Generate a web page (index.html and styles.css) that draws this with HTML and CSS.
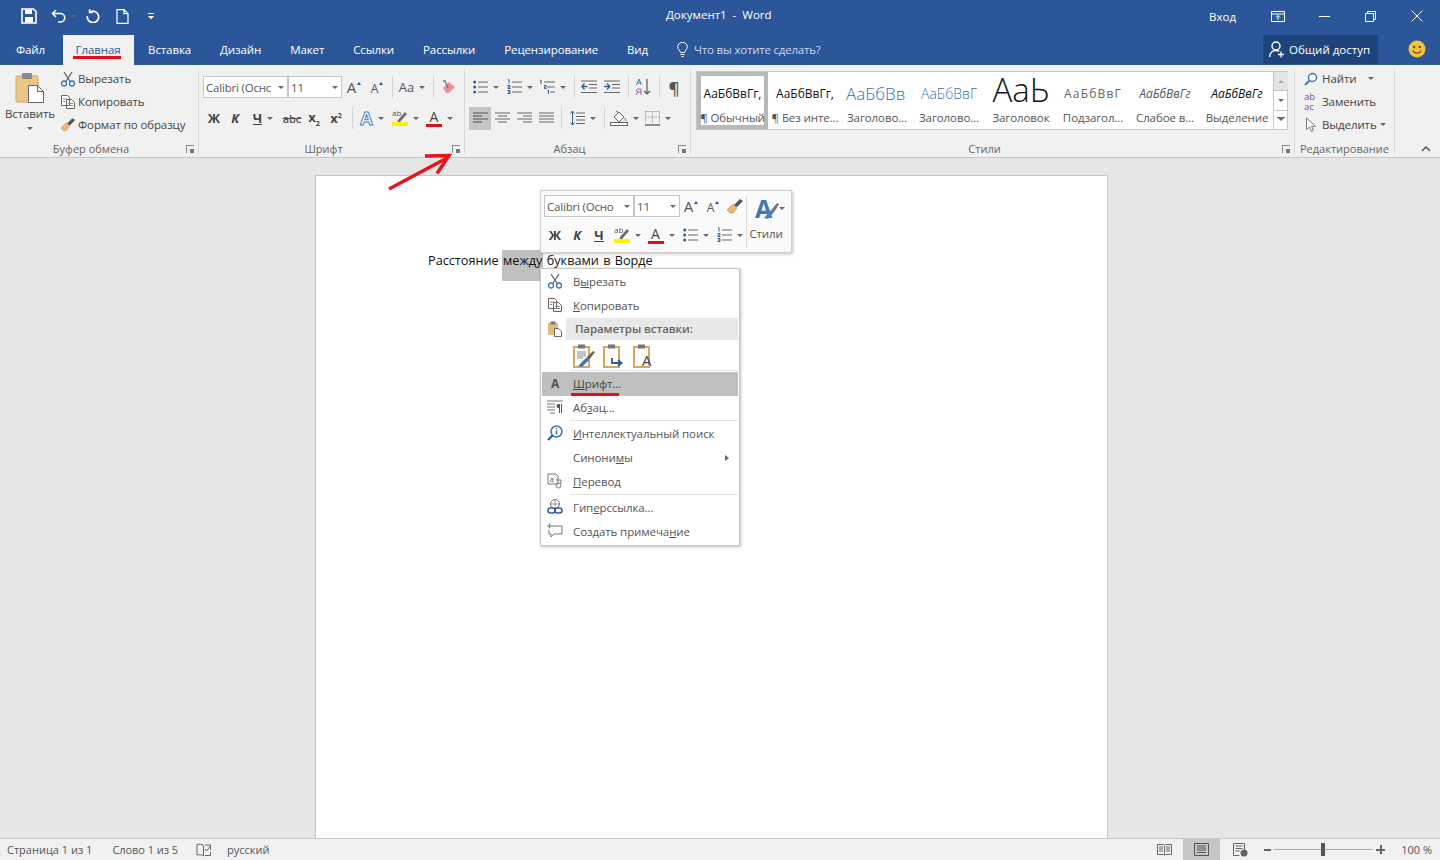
FILE: index.html
```html
<!DOCTYPE html>
<html lang="ru">
<head>
  <meta charset="UTF-8">
  <title>Документ1 - Word</title>
  <link rel="stylesheet" href="styles.css">
</head>
<body>
  <svg class="defs" width="0" height="0">
    <defs>
      <symbol id="i-cut" viewBox="0 0 16 16"><path d="M4 1l6.500 10M12 1L5.500 11" fill="none" stroke="#666" stroke-width="1.300"/><circle cx="4" cy="12.500" r="2.500" fill="none" stroke="#3f78b0" stroke-width="1.300"/><circle cx="12" cy="12.500" r="2.500" fill="none" stroke="#3f78b0" stroke-width="1.300"/></symbol>
      <symbol id="i-copy" viewBox="0 0 16 16"><path d="M1.500 1.500h6l2 2v8h-8zM6.500 5.500h5l3 3v6h-8z" fill="#fff" stroke="#666"/><path d="M3 5h4M3 7.500h2M8 9.500h5M8 11.500h5" stroke="#888"/></symbol>
      <symbol id="i-brush" viewBox="0 0 18 16"><path d="M1 12l6-6 4 4-4 5H4z" fill="#e6bd78" stroke="#b58b45" stroke-width=".6"/><path d="M8 7l6-6 3 2-6 6z" fill="#555"/></symbol>
      <symbol id="i-paste" viewBox="0 0 30 32"><rect x="1" y="4" width="22" height="26" rx="1.500" fill="#e9c688" stroke="#d3a95f"/><rect x="7" y="1" width="10" height="6" rx="1" fill="#8a8a8a"/><path d="M13.500 13.500h9l6 6v11h-15z" fill="#fff" stroke="#666"/><path d="M22.500 13.500v6h6" fill="none" stroke="#666"/></symbol>
      <symbol id="i-eraser" viewBox="0 0 16 16"><path d="M2 9l6-6 6 5-6 6H5z" fill="#ef8f9b"/><path d="M4 2l3 7" stroke="#777" stroke-width="1.400"/><path d="M2 2l3 0" stroke="#4d82b8" stroke-width="1.400"/></symbol>
      <symbol id="i-bullets" viewBox="0 0 15 16"><path d="M5 3h10M5 8h10M5 13h10" stroke="#666"/><circle cx="1.700" cy="3" r="1.500" fill="#2f5f97"/><circle cx="1.700" cy="8" r="1.500" fill="#2f5f97"/><circle cx="1.700" cy="13" r="1.500" fill="#2f5f97"/></symbol>
      <symbol id="i-numbers" viewBox="0 0 15 16"><path d="M5 3h10M5 8h10M5 13h10" stroke="#666"/><path d="M1 1l1-.500v4M.500 6.500h2.500v1.500h-2v1.500h2.500M.500 11.500h2.500v3h-2.500M1 13h2" fill="none" stroke="#2f5f97"/></symbol>
      <symbol id="i-multi" viewBox="0 0 16 16"><path d="M5 3h11M8 8h8M11 13h5" stroke="#666"/><path d="M1 1.500l1-.500v4M5 6.500h2v1.500h-1.500v1.500h2M8.500 11.500l1-.500v4" fill="none" stroke="#2f5f97"/></symbol>
      <symbol id="i-outdent" viewBox="0 0 16 14"><path d="M0 1h16M8 4.500h8M8 8h8M0 12.500h16" stroke="#666"/><path d="M6.500 6.500H1M3.500 3.500L.800 6.500l2.700 3" fill="none" stroke="#2f5f97" stroke-width="1.300"/></symbol>
      <symbol id="i-indent" viewBox="0 0 16 14"><path d="M0 1h16M8 4.500h8M8 8h8M0 12.500h16" stroke="#666"/><path d="M0 6.500h5.500M3 3.500l2.700 3-2.700 3" fill="none" stroke="#2f5f97" stroke-width="1.300"/></symbol>
      <symbol id="i-sort" viewBox="0 0 16 18"><path d="M12 1v15M9 13l3 3 3-3" fill="none" stroke="#555" stroke-width="1.200"/><path d="M1.500 7L4 1l2.500 6M2.500 5h3" fill="none" stroke="#3f78b0"/><path d="M6 11H3a1.500 1.500 0 0 0 0 3h3M6 11v6M3 14l-2 3" fill="none" stroke="#b0559a"/></symbol>
      <symbol id="i-left" viewBox="0 0 15 12"><path d="M0 1h15M0 4h9M0 7h15M0 10h9" stroke="#555"/></symbol>
      <symbol id="i-center" viewBox="0 0 15 12"><path d="M0 1h15M3 4h9M0 7h15M3 10h9" stroke="#666"/></symbol>
      <symbol id="i-right" viewBox="0 0 15 12"><path d="M0 1h15M6 4h9M0 7h15M6 10h9" stroke="#666"/></symbol>
      <symbol id="i-just" viewBox="0 0 15 12"><path d="M0 1h15M0 4h15M0 7h15M0 10h15" stroke="#666"/></symbol>
      <symbol id="i-spacing" viewBox="0 0 15 16"><path d="M6 3h9M6 6.500h9M6 10h9M6 13.500h9" stroke="#666"/><path d="M2.500 1v14M.500 3.500l2-2.500 2 2.500M.500 12.500l2 2.500 2-2.500" fill="none" stroke="#2f5f97"/></symbol>
      <symbol id="i-shade" viewBox="0 0 18 16"><path d="M4 7l5-5 5 5-5 5z" fill="#fff" stroke="#666"/><path d="M6 1l3 2" stroke="#666"/><path d="M14.500 8c1.200 1.500 1.500 2.300 1.500 3" stroke="#666" fill="none"/><rect x=".500" y="12.500" width="17" height="3" fill="#fff" stroke="#666"/></symbol>
      <symbol id="i-border" viewBox="0 0 15 15"><path d="M.500 .500h14v11M.500 .500v11M7.500 .500v11M.500 6h14" fill="none" stroke="#888" stroke-dasharray="1 1"/><path d="M0 14h15" stroke="#555" stroke-width="1.300"/></symbol>
      <symbol id="i-hl" viewBox="0 0 16 18"><text x="0" y="7" class="svg-t">ab</text><path d="M6 11L13 3l2 2-7 8-3 1z" fill="#6d6d6d"/><rect x="0" y="13" width="16" height="4" fill="#fff200"/></symbol>
      <symbol id="i-find" viewBox="0 0 14 14"><circle cx="8.500" cy="5.500" r="4" fill="#fff" stroke="#3f78b0" stroke-width="1.500"/><path d="M5.500 8.500L1 13" stroke="#3f78b0" stroke-width="2"/></symbol>
      <symbol id="i-select" viewBox="0 0 12 16"><path d="M1.500 1v11.500l3-2.500 2 4.500 2-1-2-4.200h4z" fill="#fff" stroke="#777"/></symbol>
      <symbol id="i-smart" viewBox="0 0 16 16"><circle cx="9.500" cy="6.500" r="5.500" fill="#fff" stroke="#3f78b0" stroke-width="1.500"/><path d="M5.500 10.500L1 15" stroke="#2f5f97" stroke-width="2.200"/><path d="M9.500 3v1M9.500 5.500v4" stroke="#2f5f97" stroke-width="1.400"/></symbol>
      <symbol id="i-para" viewBox="0 0 16 14"><path d="M0 1h16M0 4h8M0 7h8M0 10h8M3 13h5" stroke="#777"/><path d="M14.500 4v9M12.500 4v9" stroke="#555"/><path d="M13 4h-1.500a2 2 0 0 0 0 4H13z" fill="#555"/></symbol>
      <symbol id="i-trans" viewBox="0 0 16 16"><path d="M1 1h8l2 2v8H1z" fill="#fff" stroke="#777"/><text x="2.500" y="9" class="svg-t">a</text><path d="M9 7h5v4" fill="none" stroke="#777"/><circle cx="11.500" cy="12.500" r="2.500" fill="none" stroke="#777"/></symbol>
      <symbol id="i-link" viewBox="0 0 16 16"><circle cx="8" cy="5" r="4.500" fill="#fff" stroke="#777"/><path d="M3.500 5h9M8 .500v9" stroke="#777" stroke-width=".7"/><rect x="1" y="9" width="7" height="5" rx="2.500" fill="none" stroke="#2f5f97" stroke-width="1.500"/><rect x="8" y="9" width="7" height="5" rx="2.500" fill="none" stroke="#2f5f97" stroke-width="1.500"/></symbol>
      <symbol id="i-note" viewBox="0 0 16 16"><path d="M5 3h10v8H7l-3 3v-3H2V7" fill="#fff" stroke="#777"/><path d="M0 3h5M2.500 .500v5" stroke="#2f9d62" stroke-width="1.100"/></symbol>
      <symbol id="i-pastesm" viewBox="0 0 16 16"><rect x="1" y="2" width="10" height="12" fill="#e6bd78"/><rect x="3.500" y="0.500" width="5" height="3" fill="#777"/><path d="M7.500 7.500h4l3 3v5h-7z" fill="#fff" stroke="#666"/></symbol>
    </defs>
  </svg>

  <header class="titlebar">
    <div class="qat">
      <svg width="16" height="16" viewBox="0 0 16 16"><path d="M1 1h11.500L15 3.500V15H1z" fill="none" stroke="#fff" stroke-width="1.600"/><rect x="4" y="1.500" width="7" height="4.500" fill="#fff"/><rect x="4" y="9" width="8" height="5.500" fill="#fff"/></svg>
      <svg class="undo" width="15" height="14" viewBox="0 0 15 14"><path d="M5 1L1.500 4.500 5 8M2 4.500h7.500a4 4 0 0 1 0 8.500H7" fill="none" stroke="#fff" stroke-width="1.600"/></svg>
      <span class="caret caret-w"></span>
      <svg class="redo" width="14" height="14" viewBox="0 0 14 14"><path d="M3.800 3.200A5.700 5.700 0 1 1 1.300 7.200" fill="none" stroke="#fff" stroke-width="1.700"/><path d="M3.500 .300v3.300h3.400" fill="none" stroke="#fff" stroke-width="1.500"/></svg>
      <svg class="newdoc" width="13" height="15" viewBox="0 0 13 15"><path d="M1 .700h7l4 4v9.600H1zM8 .700v4h4" fill="none" stroke="#fff" stroke-width="1.200"/></svg>
      <svg class="more" width="8" height="8" viewBox="0 0 8 8"><path d="M1 1.500h6" stroke="#fff"/><path d="M.800 4h6.400L4 7.300z" fill="#fff"/></svg>
    </div>
    <div class="doc-title">Документ1&nbsp; -&nbsp; Word</div>
    <div class="win">
      <span class="signin">Вход</span>
      <svg class="win-ico first" width="14" height="11" viewBox="0 0 14 11"><path d="M.500 .500h13v10H.500zM.500 3h13" fill="none" stroke="#fff"/><path d="M7 9V4.500M5 6.500l2-2 2 2" fill="none" stroke="#fff"/></svg>
      <svg class="win-ico" width="11" height="11" viewBox="0 0 11 11"><path d="M0 5.500h11" stroke="#fff"/></svg>
      <svg class="win-ico" width="11" height="11" viewBox="0 0 11 11"><path d="M.500 2.500h8v8h-8zM2.500 2.500v-2h8v8h-2" fill="none" stroke="#fff"/></svg>
      <svg class="win-ico" width="12" height="12" viewBox="0 0 12 12"><path d="M.500 .500l11 11M11.500 .500l-11 11" stroke="#fff"/></svg>
    </div>
  </header>

  <nav class="tabs">
    <a class="tab">Файл</a>
    <a class="tab active">Главная</a>
    <a class="tab">Вставка</a>
    <a class="tab">Дизайн</a>
    <a class="tab">Макет</a>
    <a class="tab">Ссылки</a>
    <a class="tab">Рассылки</a>
    <a class="tab">Рецензирование</a>
    <a class="tab">Вид</a>
    <div class="tell">
      <svg width="11" height="15" viewBox="0 0 11 15"><path d="M3.500 10.500C3 8 .700 7.500 .700 4.700a4.800 4.300 0 0 1 9.600 0c0 2.800-2.300 3.300-2.800 5.800zM3.500 12.500h4M4.500 14.500h2" fill="none" stroke="#fff"/></svg>
      <span>Что вы хотите сделать?</span>
    </div>
    <div class="share">
      <svg width="16" height="17" viewBox="0 0 16 17"><circle cx="7" cy="5" r="4" fill="none" stroke="#fff" stroke-width="1.400"/><path d="M.700 16c0-4 2.500-6.500 6.300-6.500 1.300 0 2.300.3 3.200.8" fill="none" stroke="#fff" stroke-width="1.400"/><path d="M12 10.500v6M9 13.500h6" stroke="#fff" stroke-width="1.300"/></svg>
      <span>Общий доступ</span>
    </div>
    <svg class="smile" width="18" height="18" viewBox="0 0 18 18"><circle cx="9" cy="9" r="8.500" fill="#f5c33b"/><circle cx="6.200" cy="7" r="1.200" fill="#6b4a10"/><circle cx="11.800" cy="7" r="1.200" fill="#6b4a10"/><path d="M4.800 10.500c1.800 3.500 6.600 3.500 8.400 0" fill="none" stroke="#6b4a10" stroke-width="1.100"/></svg>
  </nav>

  <section class="ribbon">
    <div class="group g-clip">
      <div class="group-body clip-body">
        <div class="paste">
          <svg width="30" height="32"><use href="#i-paste"/></svg>
          <span>Вставить</span>
          <span class="caret"></span>
        </div>
        <div class="stack">
          <div class="stack-row"><svg width="16" height="16"><use href="#i-cut"/></svg><span>Вырезать</span></div>
          <div class="stack-row"><svg width="16" height="16"><use href="#i-copy"/></svg><span>Копировать</span></div>
          <div class="stack-row"><svg width="16" height="15"><use href="#i-brush"/></svg><span>Формат по образцу</span></div>
        </div>
      </div>
      <div class="group-label">Буфер обмена<span class="launch"></span></div>
    </div>

    <div class="group g-font">
      <div class="group-body tool-rows">
        <div class="row">
          <div class="combo c-font"><span class="combo-text">Calibri (Оснс</span><span class="caret"></span></div>
          <div class="combo c-size"><span class="combo-text">11</span><span class="caret"></span></div>
          <div class="btn w24"><span class="big-a">A</span><span class="sup-caret"></span></div>
          <div class="btn w22"><span class="small-a">A</span><span class="sup-caret"></span></div>
          <span class="sep w8"></span>
          <div class="btn w32"><span class="aa">Aa</span><span class="caret"></span></div>
          <span class="sep w10"></span>
          <div class="btn w22"><svg width="16" height="16"><use href="#i-eraser"/></svg></div>
        </div>
        <div class="row">
          <div class="btn w22"><b class="fmt">Ж</b></div>
          <div class="btn w20"><b class="fmt"><i>К</i></b></div>
          <div class="btn w36"><b class="fmt und">Ч</b><span class="caret"></span></div>
          <div class="btn w22"><span class="strike">abc</span></div>
          <div class="btn w22"><b class="fmt">x<sub>2</sub></b></div>
          <div class="btn w22"><b class="fmt">x<sup>2</sup></b></div>
          <span class="sep w10"></span>
          <div class="btn w30"><span class="fx">A</span><span class="caret"></span></div>
          <div class="btn w37"><svg width="16" height="18"><use href="#i-hl"/></svg><span class="caret"></span></div>
          <div class="btn w31"><span class="acolor">A</span><span class="caret"></span></div>
        </div>
      </div>
      <div class="group-label">Шрифт<span class="launch"></span></div>
    </div>

    <div class="group g-para">
      <div class="group-body tool-rows">
        <div class="row">
          <div class="btn w34"><svg width="15" height="16"><use href="#i-bullets"/></svg><span class="caret"></span></div>
          <div class="btn w33"><svg width="15" height="16"><use href="#i-numbers"/></svg><span class="caret"></span></div>
          <div class="btn w32"><svg width="16" height="16"><use href="#i-multi"/></svg><span class="caret"></span></div>
          <span class="sep w12"></span>
          <div class="btn w18"><svg width="16" height="14"><use href="#i-outdent"/></svg></div>
          <div class="btn w28"><svg width="16" height="14"><use href="#i-indent"/></svg></div>
          <span class="sep w4"></span>
          <div class="btn w26"><svg width="16" height="18"><use href="#i-sort"/></svg></div>
          <span class="sep w6"></span>
          <div class="btn w24"><span class="pilcrow">¶</span></div>
        </div>
        <div class="row">
          <div class="btn w22 on"><svg width="15" height="12"><use href="#i-left"/></svg></div>
          <div class="btn w23"><svg width="15" height="12"><use href="#i-center"/></svg></div>
          <div class="btn w21"><svg width="15" height="12"><use href="#i-right"/></svg></div>
          <div class="btn w22"><svg width="15" height="12"><use href="#i-just"/></svg></div>
          <span class="sep w8"></span>
          <div class="btn w35"><svg width="15" height="16"><use href="#i-spacing"/></svg><span class="caret"></span></div>
          <span class="sep w8"></span>
          <div class="btn w32"><svg width="18" height="16"><use href="#i-shade"/></svg><span class="caret"></span></div>
          <div class="btn w36"><svg width="15" height="15"><use href="#i-border"/></svg><span class="caret"></span></div>
        </div>
      </div>
      <div class="group-label">Абзац<span class="launch"></span></div>
    </div>

    <div class="group g-styles">
      <div class="group-body">
        <div class="gallery">
          <div class="style-item selected"><span class="pv">АаБбВвГг,</span><span class="st-name">¶ Обычный</span></div>
          <div class="style-item"><span class="pv">АаБбВвГг,</span><span class="st-name">¶ Без инте...</span></div>
          <div class="style-item"><span class="pv pv-h1">АаБбВв</span><span class="st-name">Заголово...</span></div>
          <div class="style-item"><span class="pv pv-h2">АаБбВвГ</span><span class="st-name">Заголово...</span></div>
          <div class="style-item"><span class="pv pv-title">АаЬ</span><span class="st-name">Заголовок</span></div>
          <div class="style-item"><span class="pv pv-sub">АаБбВвГ</span><span class="st-name">Подзагол...</span></div>
          <div class="style-item"><span class="pv pv-weak">АаБбВвГг</span><span class="st-name">Слабое в...</span></div>
          <div class="style-item"><span class="pv pv-em">АаБбВвГг</span><span class="st-name">Выделение</span></div>
          <div class="gallery-scroll">
            <span class="gs gs-up"><i class="caret caret-up"></i></span>
            <span class="gs"><i class="caret"></i></span>
            <span class="gs gs-more"><i class="caret"></i></span>
          </div>
        </div>
      </div>
      <div class="group-label">Стили<span class="launch"></span></div>
    </div>

    <div class="group g-edit">
      <div class="group-body stack edit-stack">
        <div class="stack-row"><svg width="14" height="14"><use href="#i-find"/></svg><span>Найти</span><span class="caret find-caret"></span></div>
        <div class="stack-row"><span class="abac">ab<br>ac</span><span>Заменить</span></div>
        <div class="stack-row"><svg width="14" height="16"><use href="#i-select"/></svg><span>Выделить</span><span class="caret sel-caret"></span></div>
      </div>
      <div class="group-label label-edit">Редактирование</div>
    </div>

    <svg class="collapse" width="10" height="6" viewBox="0 0 10 6"><path d="M1 5l4-4 4 4" fill="none" stroke="#555" stroke-width="1.500"/></svg>
  </section>

  <main class="workspace">
    <div class="page">
      <p class="doc-line">Расстояние <span class="sel">между</span> буквами в Ворде</p>
    </div>
  </main>

  <footer class="status">
    <span class="st-page">Страница 1 из 1</span>
    <span class="st-words">Слово 1 из 5</span>
    <svg class="st-book" width="15" height="14" viewBox="0 0 15 14"><path d="M7.500 2.500C6 1 3 1 1 1.500V12c2-.5 5-.5 6.500 1V2.500M7.500 13V2.500" fill="none" stroke="#666"/><path d="M9 2h5.500v5M9 6l1.500 2L14 3.500M14.500 9v3.500H9" fill="none" stroke="#666"/></svg>
    <span class="st-lang">русский</span>
    <div class="st-right">
      <svg class="view" width="15" height="13" viewBox="0 0 15 13"><path d="M.500 1.500h6l1 1 1-1h6v10h-6l-1 1-1-1h-6zM7.500 2.500v9M2 4h4M2 6h4M2 8h4M9 4h4M9 6h4M9 8h4" fill="none" stroke="#666"/></svg>
      <span class="view-on"><svg width="15" height="13" viewBox="0 0 15 13"><path d="M.500 .500h14v12H.500zM3 3h9M3 5h9M3 7h9M3 9.500h9" fill="none" stroke="#555"/></svg></span>
      <svg class="view web" width="15" height="14" viewBox="0 0 15 14"><path d="M.500 .500h11v8M.500 .500v12h6M2.500 3h7M2.500 5.500h7M2.500 8h4" fill="none" stroke="#666"/><circle cx="11" cy="10" r="3.500" fill="#666"/></svg>
      <span class="zoom-minus"></span>
      <div class="slider"><span class="thumb"></span></div>
      <span class="zoom-plus"></span>
      <span class="zoom-val">100 %</span>
    </div>
  </footer>

  <!-- всплывающие элементы поверх документа -->
  <div class="mini">
    <div class="mini-left">
      <div class="row">
        <div class="combo c-mfont"><span class="combo-text">Calibri (Осно</span><span class="caret"></span></div>
        <div class="combo c-msize"><span class="combo-text">11</span><span class="caret"></span></div>
        <div class="btn w22"><span class="big-a">A</span><span class="sup-caret"></span></div>
        <div class="btn w22"><span class="small-a">A</span><span class="sup-caret"></span></div>
        <div class="btn w22"><svg width="18" height="16"><use href="#i-brush"/></svg></div>
      </div>
      <div class="row">
        <div class="btn w22"><b class="fmt">Ж</b></div>
        <div class="btn w22"><b class="fmt"><i>К</i></b></div>
        <div class="btn w22"><b class="fmt und">Ч</b></div>
        <div class="btn w34"><svg width="16" height="18"><use href="#i-hl"/></svg><span class="caret"></span></div>
        <div class="btn w34"><span class="acolor">A</span><span class="caret"></span></div>
        <div class="btn w35"><svg width="15" height="16"><use href="#i-bullets"/></svg><span class="caret"></span></div>
        <div class="btn w33"><svg width="15" height="16"><use href="#i-numbers"/></svg><span class="caret"></span></div>
      </div>
    </div>
    <div class="mini-styles">
      <div class="styles-ico"><span class="styles-a">A</span><svg width="16" height="18" viewBox="0 0 16 18"><path d="M1 16l8-9 3 2-7 8z" fill="#4d82b8"/><path d="M9 7l5-6 2 1-4 7z" fill="#777"/></svg><span class="caret"></span></div>
      <span>Стили</span>
    </div>
  </div>

  <ul class="menu">
    <li class="item"><svg width="16" height="16"><use href="#i-cut"/></svg><span>В<u>ы</u>резать</span></li>
    <li class="item"><svg width="16" height="16"><use href="#i-copy"/></svg><span><u>К</u>опировать</span></li>
    <li class="item paste-head"><svg width="16" height="16"><use href="#i-pastesm"/></svg><b>Параметры вставки:</b></li>
    <li class="paste-opts">
      <svg width="22" height="24" viewBox="0 0 22 24"><rect x="1" y="3" width="15" height="20" fill="#fff" stroke="#d3a95f" stroke-width="2"/><rect x="5" y="0.500" width="7" height="4" fill="#777"/><path d="M4 8h9M4 10h9M4 12h9M4 14h6" stroke="#888"/><path d="M5 22l8-8 3 2-7 7z" fill="#3f78b0"/><path d="M13 14l7-7 2 1-6 8z" fill="#666"/></svg>
      <svg width="22" height="24" viewBox="0 0 22 24"><rect x="1" y="3" width="15" height="20" fill="#fff" stroke="#d3a95f" stroke-width="2"/><rect x="5" y="0.500" width="7" height="4" fill="#777"/><path d="M9 14v5h9M15 16l3.500 3-3.500 3" fill="none" stroke="#2f5f97" stroke-width="1.800"/></svg>
      <svg class="opt-a" width="22" height="24" viewBox="0 0 22 24"><rect x="1" y="3" width="15" height="20" fill="#fff" stroke="#d3a95f" stroke-width="2"/><rect x="5" y="0.500" width="7" height="4" fill="#777"/><text x="9" y="22" class="svg-big">A</text></svg>
    </li>
    <li class="menu-sep"></li>
    <li class="item hot"><span class="font-a">A</span><span><u>Ш</u>рифт...</span></li>
    <li class="item"><svg width="16" height="14"><use href="#i-para"/></svg><span>Аб<u>з</u>ац...</span></li>
    <li class="menu-sep"></li>
    <li class="item"><svg width="16" height="16"><use href="#i-smart"/></svg><span><u>И</u>нтеллектуальный поиск</span></li>
    <li class="item"><span class="no-ico"></span><span>Синони<u>м</u>ы</span><i class="arrow-right"></i></li>
    <li class="item"><svg width="16" height="16"><use href="#i-trans"/></svg><span><u>П</u>еревод</span></li>
    <li class="menu-sep"></li>
    <li class="item"><svg width="16" height="16"><use href="#i-link"/></svg><span>Гип<u>е</u>рссылка...</span></li>
    <li class="item"><svg width="16" height="16"><use href="#i-note"/></svg><span>Создать примеча<u>н</u>ие</span></li>
  </ul>

  <svg class="red-arrow" width="70" height="42" viewBox="0 0 70 42"><path d="M2 38L60 7" stroke="#e8141c" stroke-width="3.500" fill="none"/><path d="M38 5l24-.500-12 18" stroke="#e8141c" stroke-width="3.500" fill="none"/></svg>
</body>
</html>
```

FILE: styles.css
```css
* {
  box-sizing: border-box;
}

body {
  margin: 0;
  width: 1440px;
  height: 860px;
  overflow: hidden;
  position: relative;
  display: flex;
  flex-direction: column;
  font-family: "Open Sans", "Noto Sans", sans-serif;
  font-size: 11.5px;
  color: #444;
  background: #e6e6e6;
}

.defs {
  position: absolute;
}

.svg-t {
  font-family: "Open Sans", sans-serif;
  font-size: 8px;
  fill: #555;
}

.svg-big {
  font-family: "Open Sans", sans-serif;
  font-size: 15px;
  fill: #444;
}

/* TITLE BAR */
.titlebar {
  height: 32px;
  flex: none;
  background: #2b579a;
  color: #fff;
  display: flex;
  align-items: center;
  position: relative;
}

.qat {
  display: flex;
  align-items: center;
  padding-left: 21px;
}

.undo {
  margin-left: 14px;
}

.caret-w {
  margin-left: 5px;
  border-top-color: #fff;
}

.redo {
  margin-left: 9px;
}

.newdoc {
  margin-left: 16px;
}

.more {
  margin-left: 18px;
}

.doc-title {
  position: absolute;
  left: 666px;
  top: 7px;
  white-space: nowrap;
}

.win {
  margin-left: auto;
  display: flex;
  align-items: center;
  height: 100%;
}

.signin {
  margin-right: 35px;
}

.win-ico {
  margin-right: 35px;
}

.win-ico.first {
  margin-right: 34px;
}

.win-ico:last-child {
  margin-right: 17px;
}

/* TABS */
.tabs {
  height: 33px;
  flex: none;
  background: #2b579a;
  color: #fff;
  display: flex;
  align-items: stretch;
  padding-left: 1.500px;
}

.tab {
  padding: 1px 14.500px 0;
  display: flex;
  align-items: center;
  white-space: nowrap;
  position: relative;
  letter-spacing: -0.1px;
}

.tab.active {
  background: #f1f1f1;
  color: #2b579a;
  margin: 3px 0 0 3px;
  padding: 0 13px 2px;
  width: 71px;
  justify-content: center;
}

.tab.active::after {
  content: "";
  position: absolute;
  left: 10px;
  right: 13px;
  top: 21px;
  height: 3px;
  background: #e0101c;
}

.tell {
  display: flex;
  align-items: center;
  gap: 6px;
  margin-left: 14.500px;
  padding-top: 1px;
  color: #c9d6ea;
  white-space: nowrap;
  letter-spacing: -0.2px;
}

.share {
  margin: 3px 0 1px auto;
  width: 115px;
  display: flex;
  align-items: center;
  gap: 4px;
  padding-left: 6px;
  background: #1f447c;
  white-space: nowrap;
}

.smile {
  align-self: center;
  margin: 0 14px 0 30px;
}

/* RIBBON */
.ribbon {
  height: 93px;
  flex: none;
  background: #f1f1f1;
  border-bottom: 1px solid #c6c6c6;
  display: flex;
  color: #444;
}

.group {
  display: flex;
  flex-direction: column;
  position: relative;
  margin: 4px 0 3px;
  border-right: 1px solid #dadada;
}

.group-body {
  flex: 1;
  min-height: 0;
}

.group-label {
  height: 16px;
  margin-bottom: -3px;
  padding-right: 16px;
  text-align: center;
  color: #666;
  font-size: 11px;
  line-height: 16px;
  position: relative;
  white-space: nowrap;
}

.label-edit {
  padding-right: 0;
}

.launch {
  position: absolute;
  right: 4px;
  top: 4px;
  width: 8px;
  height: 8px;
  border-left: 1px solid #888;
  border-top: 1px solid #888;
}

.launch::after {
  content: "";
  position: absolute;
  right: 0;
  bottom: 0;
  width: 4px;
  height: 4px;
  background: #777;
}

.g-clip {
  width: 199px;
}

.g-font {
  width: 266px;
}

.g-para {
  width: 226px;
}

.g-styles {
  width: 604px;
}

.g-edit {
  width: 100px;
}

.clip-body {
  display: flex;
}

.paste {
  width: 60px;
  display: flex;
  flex-direction: column;
  align-items: center;
  padding-top: 3px;
}

.paste span:nth-child(2) {
  margin-top: 2px;
  line-height: 16px;
  letter-spacing: -0.1px;
}

.paste .caret {
  margin-top: 5px;
}

.stack {
  margin-top: -2px;
  letter-spacing: -0.1px;
}

.stack-row {
  height: 23px;
  display: flex;
  align-items: center;
  gap: 2px;
  white-space: nowrap;
}

.stack-row svg {
  flex: none;
}

.tool-rows {
  padding: 7px 0 0 4px;
}

.row {
  display: flex;
  align-items: center;
  height: 22px;
  margin-bottom: 9px;
}

.btn {
  height: 22px;
  flex: none;
  display: flex;
  align-items: center;
  justify-content: center;
  position: relative;
}

.btn .caret {
  margin-left: 5px;
}

.btn.on {
  background: #c5c5c5;
  height: 23px;
}

.w18 { width: 18px; }
.w20 { width: 20px; }
.w21 { width: 21px; }
.w22 { width: 22px; }
.w23 { width: 23px; }
.w24 { width: 24px; }
.w26 { width: 26px; }
.w28 { width: 28px; }
.w30 { width: 30px; }
.w31 { width: 31px; }
.w32 { width: 32px; }
.w33 { width: 33px; }
.w34 { width: 34px; }
.w35 { width: 35px; }
.w36 { width: 36px; }
.w37 { width: 37px; }

.sep {
  height: 22px;
  flex: none;
  position: relative;
}

.sep::before {
  content: "";
  position: absolute;
  left: 50%;
  top: 0;
  bottom: 0;
  border-left: 1px solid #d4d4d4;
}

.sep.w4 { width: 4px; }
.sep.w6 { width: 6px; }
.sep.w8 { width: 8px; }
.sep.w10 { width: 10px; }
.sep.w12 { width: 12px; }

.caret {
  display: inline-block;
  width: 0;
  height: 0;
  flex: none;
  border-left: 3px solid transparent;
  border-right: 3px solid transparent;
  border-top: 3px solid #666;
}

.caret-up {
  border-top: 0;
  border-bottom: 3px solid #aaa;
}

.combo {
  height: 22px;
  flex: none;
  background: #fff;
  border: 1px solid #c6c6c6;
  display: flex;
  align-items: center;
  padding: 0 3px 0 2px;
  overflow: hidden;
}

.combo-text {
  flex: 1;
  min-width: 0;
  overflow: hidden;
  white-space: nowrap;
  font-size: 11.500px;
  letter-spacing: -0.2px;
  color: #555;
}

.c-font {
  width: 85px;
}

.c-size {
  width: 54px;
}

.c-mfont {
  width: 90px;
}

.c-msize {
  width: 46px;
}

.big-a {
  font-size: 15px;
  color: #555;
}

.small-a {
  font-size: 12px;
  color: #555;
  padding-top: 3px;
}

.sup-caret {
  width: 0;
  height: 0;
  margin: -8px 0 0 1px;
  border-left: 2.500px solid transparent;
  border-right: 2.500px solid transparent;
  border-bottom: 3px solid #2b579a;
}

.aa {
  font-size: 13px;
  color: #555;
}

.fmt {
  font-size: 13px;
  color: #444;
}

.fmt sub,
.fmt sup {
  font-size: 7px;
}

.und {
  border-bottom: 1.500px solid #444;
  line-height: 12px;
}

.strike {
  font-size: 11px;
  text-decoration: line-through;
  font-weight: 600;
  color: #555;
}

.fx {
  font-size: 18px;
  line-height: 18px;
  font-weight: 700;
  color: #fff;
  -webkit-text-stroke: 1px #4d82b8;
}

.acolor {
  font-size: 14px;
  line-height: 14px;
  color: #444;
  border-bottom: 3px solid #d8101c;
  width: 16px;
  text-align: center;
}

.pilcrow {
  font-size: 17px;
  font-weight: 600;
  color: #555;
}

/* STYLES GALLERY */
.gallery {
  margin: 2px 0 0 5px;
  width: 592px;
  height: 59px;
  background: #fff;
  border: 1px solid #c6c6c6;
  display: flex;
}

.style-item {
  width: 72px;
  flex: none;
  display: flex;
  flex-direction: column;
  align-items: center;
  padding: 5px 3px 0;
}

.style-item.selected {
  border: 4px solid #b8b8b8;
  padding: 1px 0 0;
  width: 71px;
  margin-right: 1px;
}

.pv {
  height: 33px;
  line-height: 33px;
  width: 64px;
  overflow: hidden;
  white-space: nowrap;
  font-size: 12px;
  color: #111;
  text-align: center;
  flex: none;
}

.pv-h1 {
  font-size: 17px;
  font-weight: 300;
  color: #2e74b5;
  text-align: left;
  width: 60px;
  align-self: flex-start;
  margin-left: 2px;
}

.pv-h2 {
  font-size: 14px;
  font-weight: 300;
  color: #2e74b5;
}

.pv-title {
  font-size: 33px;
  line-height: 26px;
  font-weight: 300;
  color: #111;
  overflow: visible;
}

.pv-sub {
  font-size: 12px;
  letter-spacing: 1.200px;
  color: #666;
}

.pv-weak {
  font-style: italic;
  color: #555;
}

.pv-em {
  font-style: italic;
  color: #111;
}

.st-name {
  font-size: 11.500px;
  line-height: 16px;
  white-space: nowrap;
  letter-spacing: -0.1px;
  color: #555;
}

.gallery-scroll {
  width: 15px;
  flex: none;
  display: flex;
  flex-direction: column;
  border-left: 1px solid #c6c6c6;
}

.gs {
  flex: 1;
  display: flex;
  align-items: center;
  justify-content: center;
  border-bottom: 1px solid #c6c6c6;
}

.gs:last-child {
  border-bottom: 0;
}

.gs-up {
  background: #e4e4e4;
}

.gs-more {
  position: relative;
}

.gs-more::before {
  content: "";
  position: absolute;
  left: 3px;
  right: 3px;
  top: 6px;
  border-top: 1px solid #666;
}

/* EDIT GROUP */
.edit-stack {
  padding: 0 0 0 9px;
  margin-top: -2px;
}

.edit-stack .stack-row {
  gap: 4px;
}

.abac {
  width: 14px;
  font-size: 9.500px;
  line-height: 10px;
  color: #7a4a9c;
}

.find-caret {
  margin-left: 8px;
}

.sel-caret {
  margin-left: -1px;
}

.collapse {
  align-self: flex-end;
  margin: 0 0 5px 26px;
}

/* DOCUMENT */
.workspace {
  flex: 1;
  min-height: 0;
  padding: 17px 0 0 315px;
  background: #e6e6e6;
  overflow: hidden;
}

.page {
  width: 793px;
  height: 700px;
  background: #fff;
  border: 1px solid #c6c6c6;
  padding: 74px 0 0 112px;
}

.doc-line {
  margin: 0;
  font-family: "Open Sans", sans-serif;
  font-size: 12.700px;
  word-spacing: 1px;
  line-height: 20px;
  color: #111;
  white-space: nowrap;
}

.sel {
  display: inline-block;
  height: 31px;
  margin: 0 -1px;
  padding: 0 1px;
  background: #c0c0c0;
  vertical-align: top;
}

/* STATUS BAR */
.status {
  height: 22px;
  flex: none;
  background: #f1f1f1;
  border-top: 1px solid #c6c6c6;
  display: flex;
  align-items: center;
  color: #555;
  font-size: 11px;
  white-space: nowrap;
}

.st-page {
  margin: 0 0 1px 7px;
}

.st-words {
  margin: 0 0 1px 20px;
  letter-spacing: -0.05px;
}

.st-book {
  margin-left: 18px;
}

.st-lang {
  margin: 0 0 1px 16px;
}

.st-right {
  margin-left: auto;
  display: flex;
  align-items: center;
  height: 100%;
}

.view-on {
  width: 37px;
  height: 100%;
  margin: 0 13px 0 11px;
  background: #c5c5c5;
  display: flex;
  align-items: center;
  justify-content: center;
}

.zoom-minus {
  width: 7px;
  height: 2px;
  margin-left: 16px;
  background: #666;
}

.slider {
  width: 99px;
  height: 1px;
  margin: 0 3px;
  background: #aaa;
  position: relative;
}

.thumb {
  position: absolute;
  left: 47px;
  top: -6px;
  width: 4px;
  height: 13px;
  background: #555;
}

.zoom-plus {
  width: 9px;
  height: 9px;
  background:
    linear-gradient(#666, #666) center / 9px 2px no-repeat,
    linear-gradient(#666, #666) center / 2px 9px no-repeat;
}

.zoom-val {
  margin: 0 8px 1px 16px;
}

/* MINI TOOLBAR */
.mini {
  position: absolute;
  left: 540px;
  top: 190px;
  width: 252px;
  height: 63px;
  background: #fafafa;
  border: 1px solid #d0d0d0;
  box-shadow: 1px 1px 3px rgba(0, 0, 0, 0.25);
  display: flex;
  padding: 4px 0 0 3px;
}

.mini-left {
  width: 206px;
}

.mini .row {
  margin-bottom: 7px;
}

.mini-styles {
  flex: 1;
  border-left: 1px solid #dcdcdc;
  margin: 0 0 4px;
  padding-right: 6px;
  display: flex;
  flex-direction: column;
  align-items: center;
  color: #555;
  gap: 4px;
  letter-spacing: -0.1px;
}

.styles-ico {
  height: 27px;
  margin-left: 8px;
  display: flex;
  align-items: center;
  position: relative;
}

.styles-a {
  font-size: 25px;
  line-height: 27px;
  font-weight: 700;
  color: #3f78b0;
}

.styles-ico svg {
  margin-left: -9px;
  margin-top: 4px;
}

/* CONTEXT MENU */
.menu {
  position: absolute;
  left: 540px;
  top: 268px;
  width: 200px;
  height: 278px;
  margin: 0;
  padding: 1px;
  list-style: none;
  background: #fff;
  border: 1px solid #c6c6c6;
  box-shadow: 1px 1px 3px rgba(0, 0, 0, 0.25);
  color: #555;
  letter-spacing: -0.1px;
}

.item {
  height: 24px;
  display: flex;
  align-items: center;
  position: relative;
  padding: 0 0 2px 5px;
}

.item > svg,
.no-ico,
.font-a {
  flex: none;
  width: 16px;
  margin-right: 10px;
}

.no-ico {
  height: 1px;
}

.font-a {
  text-align: center;
  font-weight: 700;
  font-size: 12px;
  color: #555;
}

.paste-head {
  height: 22px;
  padding-bottom: 0;
}

.paste-head b {
  margin-left: -7px;
  padding: 0 0 2px 9px;
  flex: 1;
  align-self: stretch;
  display: flex;
  align-items: center;
  background: #e8e8e8;
  font-weight: 600;
  color: #666;
}

.paste-opts {
  height: 30px;
  display: flex;
  align-items: center;
  gap: 8px;
  padding: 1px 0 0 31px;
}

.opt-a {
  overflow: visible;
}

.menu-sep {
  height: 1px;
  margin: 0 0 1px 28px;
  background: #e0e0e0;
}

.hot {
  background: #bfbfbf;
  color: #444;
}

.hot::after {
  content: "";
  position: absolute;
  left: 29px;
  top: 21px;
  width: 48px;
  height: 3px;
  background: #e0101c;
}

.arrow-right {
  position: absolute;
  right: 9px;
  top: 9px;
  width: 0;
  height: 0;
  border-top: 3.500px solid transparent;
  border-bottom: 3.500px solid transparent;
  border-left: 4px solid #666;
}

.red-arrow {
  position: absolute;
  left: 387px;
  top: 151px;
}
```
